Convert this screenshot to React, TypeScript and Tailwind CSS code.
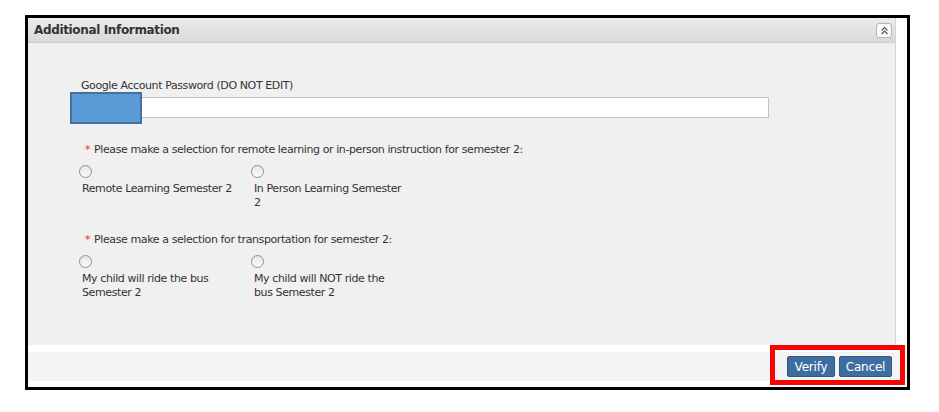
import React from "react";

const font = { fontFamily: '"DejaVu Sans", Verdana, sans-serif' };

function Radio() {
  return (
    <span className="block w-[13px] h-[13px] rounded-full border border-[#8f8f8f] bg-gradient-to-b from-[#e6e6e6] to-[#fbfbfb]" />
  );
}

function Choice({ label, narrow }: { label: string; narrow?: boolean }) {
  return (
    <div className="w-[172px]">
      <Radio />
      <div className={`mt-[4px] ml-[3px] leading-[14px] ${narrow ? "w-[150px]" : "w-[152px]"}`}>{label}</div>
    </div>
  );
}

function Question({ text, options }: { text: string; options: string[] }) {
  return (
    <div>
      <div className="ml-[6px] leading-[14px]">
        <span className="text-[#e03030] mr-[4px]">*</span>
        {text}
      </div>
      <div className="mt-[8px] flex">
        {options.map((o, idx) => (
          <Choice key={o} label={o} narrow={idx === 1} />
        ))}
      </div>
    </div>
  );
}

export default function App() {
  return (
    <div className="w-[939px] h-[412px] bg-white pt-[15px] pl-[25px]">
      <div className="relative w-[885px] h-[375px] border-[3px] border-black bg-white flex flex-col">
        <div className="flex">
          <div className="w-[868px] h-[327px] border-r border-[#d4d4d4] flex flex-col">
            <div className="h-[25px] flex items-center justify-between pl-[6px] pr-[3px] bg-gradient-to-b from-[#ececec] to-[#d9d9d9] border-b border-[#cfcfcf]">
              <span className="text-[12px] font-bold text-[#333] tracking-[-0.35px]" style={font}>
                Additional Information
              </span>
              <span className="w-[16px] h-[15px] rounded-[3px] border border-[#b5b5b5] bg-[#fafafa] flex items-center justify-center">
                <svg width="9" height="9" viewBox="0 0 9 9" fill="none" stroke="#555" strokeWidth="1.2">
                  <path d="M1.5 4.5 L4.5 1.5 L7.5 4.5" />
                  <path d="M1.5 8 L4.5 5 L7.5 8" />
                </svg>
              </span>
            </div>
            <div className="flex-1 bg-[#f0f0f0] text-[11px] tracking-[-0.4px] text-[#333] pl-[51px]" style={font}>
              <div className="mt-[36px] ml-[2px] leading-[14px]">Google Account Password (DO NOT EDIT)</div>
              <div className="mt-[4px] ml-[2px] w-[688px] h-[21px] border border-[#b8c3d3] bg-white" />
              <div className="mt-[25px]">
                <Question
                  text="Please make a selection for remote learning or in-person instruction for semester 2:"
                  options={["Remote Learning Semester 2", "In Person Learning Semester 2"]}
                />
              </div>
              <div className="mt-[23px]">
                <Question
                  text="Please make a selection for transportation for semester 2:"
                  options={["My child will ride the bus Semester 2", "My child will NOT ride the bus Semester 2"]}
                />
              </div>
            </div>
          </div>
        </div>
        <div className="mt-[7px] h-[29px] bg-[#f4f4f4] flex items-center justify-end gap-[4px] pr-[15px]" style={font}>
          <button className="h-[21px] w-[48px] rounded-[2px] bg-[#3d6e9f] border border-[#2f5a85] text-white text-[12px] tracking-[-0.2px]">
            Verify
          </button>
          <button className="h-[21px] w-[53px] rounded-[2px] bg-[#3d6e9f] border border-[#2f5a85] text-white text-[12px] tracking-[-0.2px]">
            Cancel
          </button>
        </div>
        <div className="absolute left-[42px] top-[74px] w-[72px] h-[32px] bg-[#5b9bd5] border-2 border-[#41719c]" />
        <div className="absolute left-[742px] top-[327px] w-[135px] h-[40px] border-[5px] border-[#ff0000]" />
      </div>
    </div>
  );
}
